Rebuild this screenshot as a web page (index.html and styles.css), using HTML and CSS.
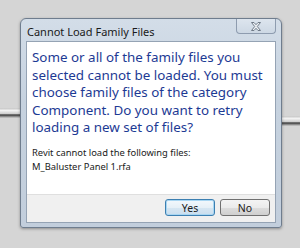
FILE: index.html
```html
<!DOCTYPE html>
<html lang="en">

<head>
  <meta charset="UTF-8">
  <meta name="viewport" content="width=device-width, initial-scale=1.0">
  <title>Cannot Load Family Files</title>
  <link rel="stylesheet" href="styles.css">
</head>

<body>
  <div class="rail rail-left"></div>
  <div class="rail rail-right"></div>
  <div class="dialog">
    <div class="titlebar">
      <span class="title">Cannot Load Family Files</span>
      <button class="close" aria-label="Close">
        <svg width="12" height="9" viewBox="0 0 12 9">
          <path d="M1.5 0.5h2.5l2 2.2 2-2.2h2.5l-3.2 4 3.2 4h-2.5l-2-2.2-2 2.2h-2.5l3.2-4z" fill="#eef1f5" stroke="#707b88" stroke-width="1" stroke-linejoin="round" />
        </svg>
      </button>
    </div>
    <div class="content">
      <div class="message">
        <p class="instruction">Some or all of the family files you<br>selected cannot be loaded. You must<br>choose family files of the category<br>Component. Do you want to retry<br>loading a new set of files?</p>
        <p class="detail">Revit cannot load the following files:<br>M_Baluster Panel 1.rfa</p>
      </div>
      <div class="footer">
        <button class="btn btn-default">Yes</button>
        <button class="btn">No</button>
      </div>
    </div>
  </div>
</body>

</html>
```

FILE: styles.css
```css
* {
  margin: 0;
  padding: 0;
  box-sizing: border-box;
}

body {
  position: relative;
  width: 300px;
  height: 248px;
  overflow: hidden;
  padding: 18px 0 0 20px;
  background-color: #d5d5d5;
  font-family: "Noto Sans", "DejaVu Sans", sans-serif;
}

.rail {
  position: absolute;
  height: 10px;
  background: linear-gradient(180deg, #c4c4c4 0%, #f2f2f2 25%, #d0d0d0 55%, #3c3c3c 70%, #8a8a8a 85%, #cfcfcf 100%);
}

.rail-left {
  left: 0;
  top: 108px;
  width: 22px;
}

.rail-right {
  right: 0;
  top: 116px;
  width: 20px;
}

.dialog {
  position: relative;
  display: flex;
  flex-direction: column;
  width: 262px;
  height: 210px;
  padding: 0 5px 4px 5px;
  border: 1px solid #6f7d8e;
  border-radius: 6px 6px 3px 3px;
  background: linear-gradient(180deg, #d3dde8 0%, #c6d2df 40%, #c2cedc 100%);
  box-shadow: 0 1px 3px rgba(0, 0, 0, 0.35);
}

.titlebar {
  display: flex;
  justify-content: space-between;
  align-items: flex-start;
  height: 22px;
}

.title {
  padding: 5px 0 0 1px;
  font-size: 11px;
  color: #1a1a1a;
}

.close {
  display: flex;
  align-items: center;
  justify-content: center;
  width: 40px;
  height: 15px;
  border: 1px solid #8e9caf;
  border-top: none;
  border-radius: 0 0 4px 4px;
  background: linear-gradient(180deg, #dde5ee 0%, #cdd8e4 100%);
}

.content {
  display: flex;
  flex-direction: column;
  flex: 1;
  border: 1px solid #95a3b4;
  background-color: #fff;
}

.message {
  flex: 1;
  padding: 7px 5px 0 5px;
}

.instruction {
  font-size: 13.4px;
  line-height: 17.6px;
  color: #1d3a94;
}

.detail {
  margin-top: 9px;
  font-size: 9.4px;
  line-height: 14px;
  color: #1a1a1a;
}

.footer {
  display: flex;
  justify-content: flex-end;
  gap: 5px;
  height: 28px;
  padding: 4px 5px 0 0;
  border-top: 1px solid #dfdfdf;
  background-color: #f0f0f0;
}

.btn {
  width: 50px;
  height: 17px;
  border: 1px solid #707070;
  border-radius: 3px;
  background: linear-gradient(180deg, #f4f4f4 0%, #ebebeb 50%, #dddddd 51%, #cfcfcf 100%);
  font-family: inherit;
  font-size: 10.5px;
  color: #1a1a1a;
}

.btn-default {
  border-color: #3c7fb1;
  background: linear-gradient(180deg, #f2f8fc 0%, #e6f0f7 50%, #d6e6f2 51%, #cadeee 100%);
  box-shadow: inset 0 0 0 1px #a8d6f2;
}
```
